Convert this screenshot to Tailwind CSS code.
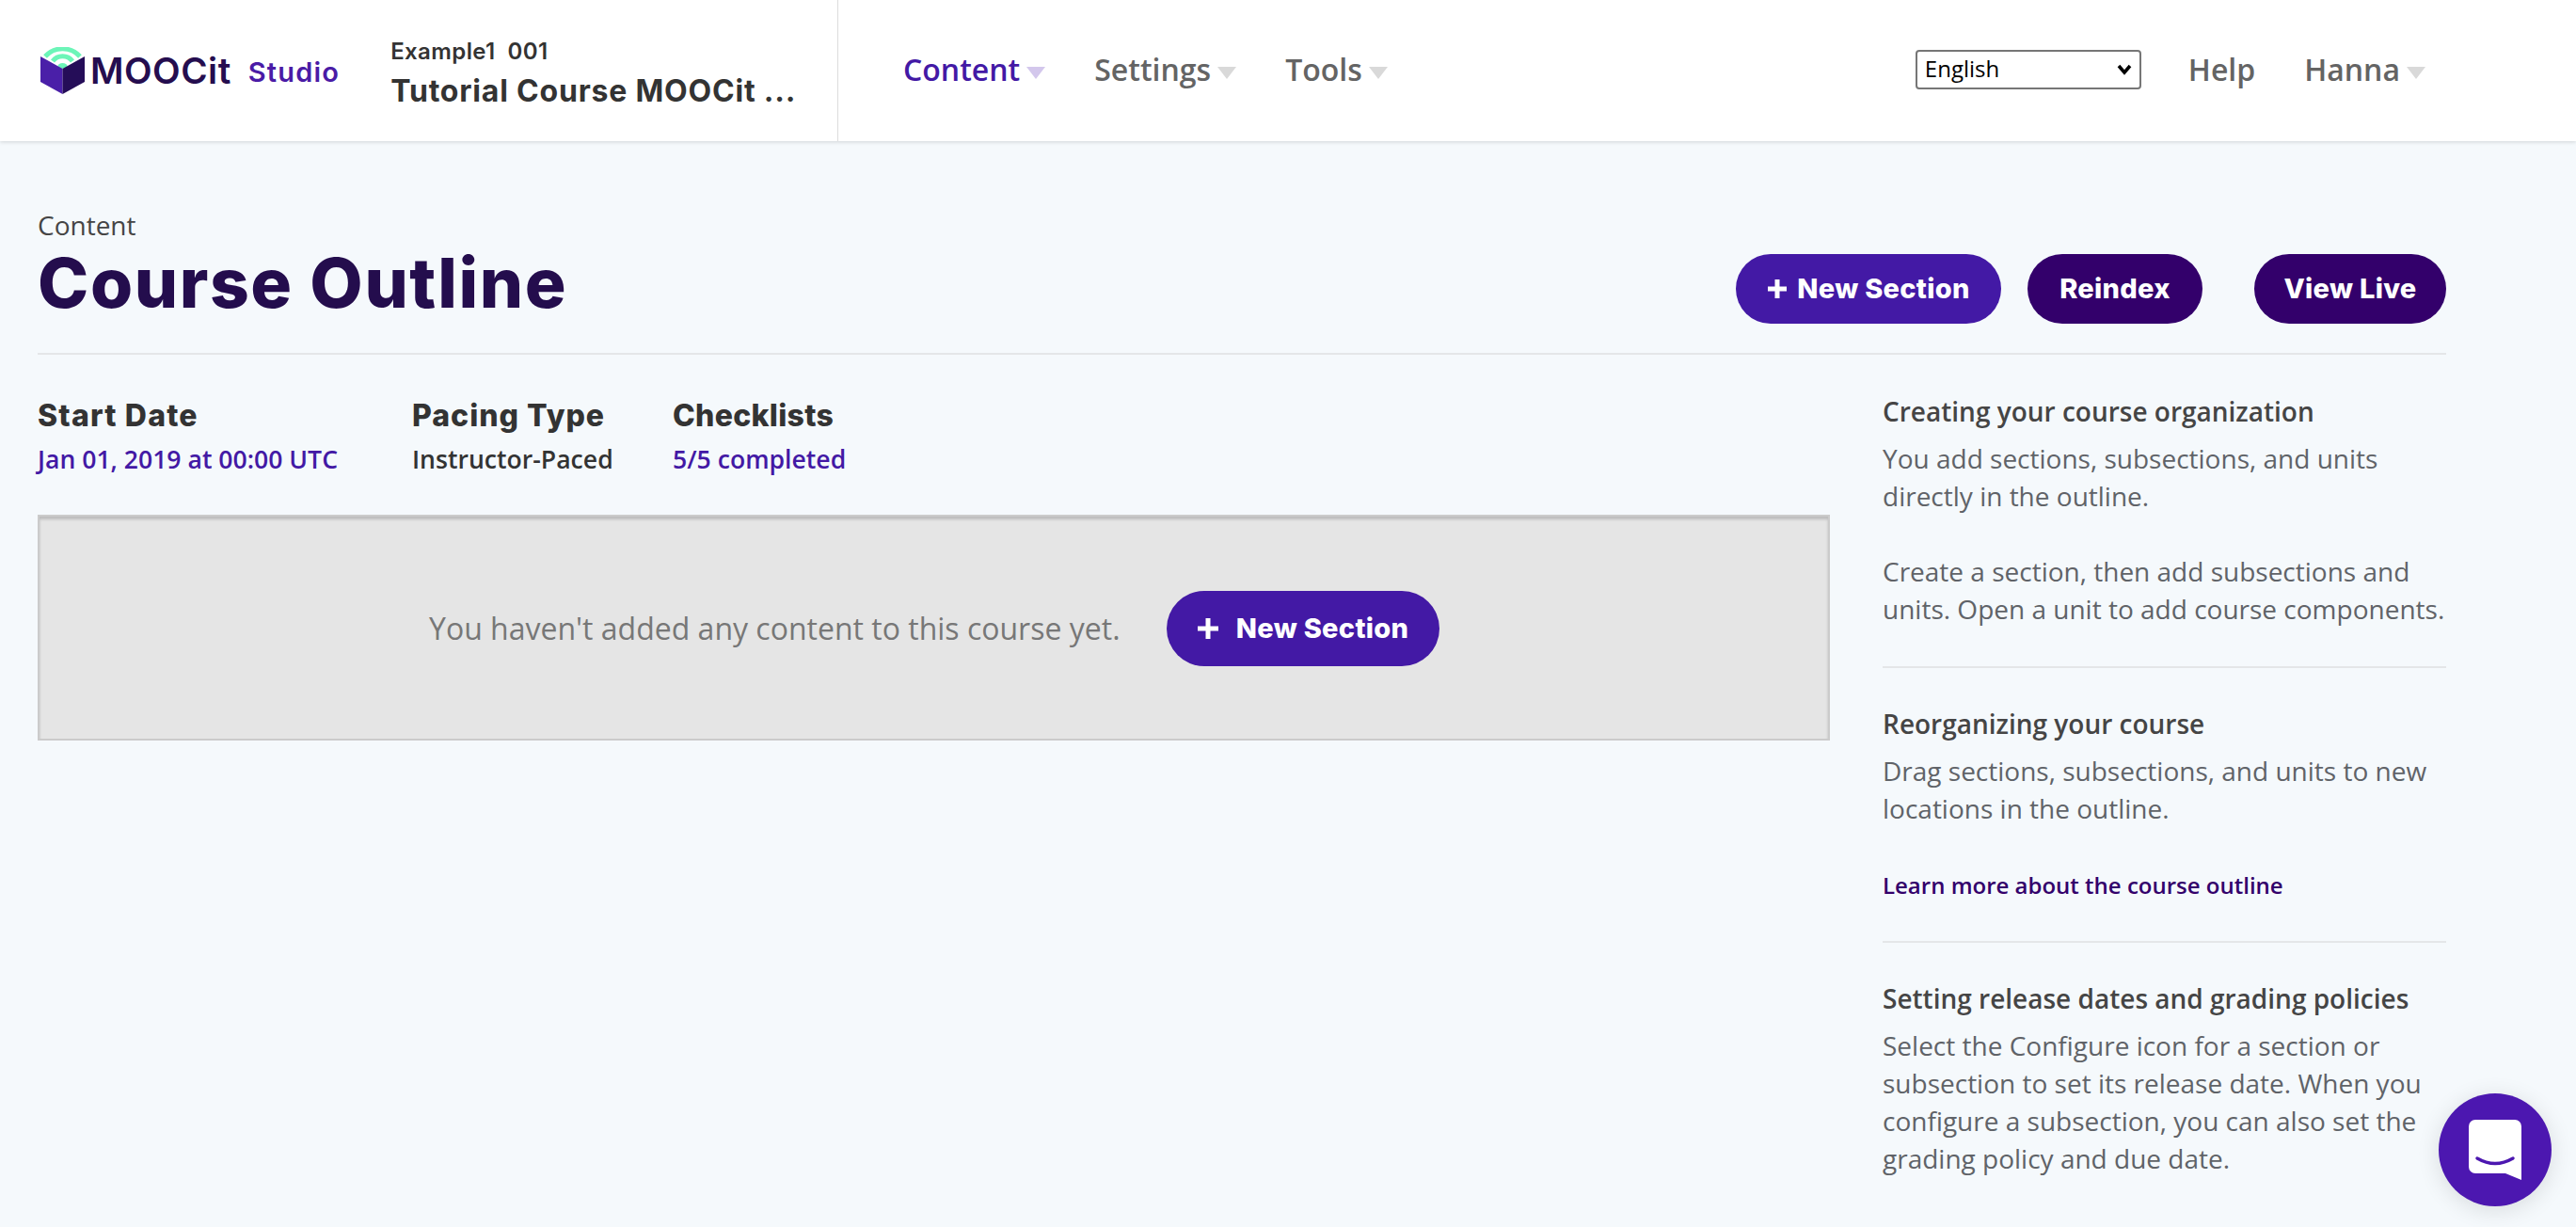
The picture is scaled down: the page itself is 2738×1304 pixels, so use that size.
<!DOCTYPE html>
<html><head><meta charset="utf-8"><title>Course Outline</title>
<script src="https://cdn.jsdelivr.net/npm/@tailwindcss/browser@4"></script></head>
<body class="m-0 h-[1304px] w-[2738px] overflow-hidden bg-[#f5f9fc] font-['Open_Sans',sans-serif] relative">
<header class="h-[150px] bg-white flex items-center shadow-[0_1px_4px_rgba(0,0,0,0.15)] relative">
  <div class="w-[891px] h-full border-r border-[#dcdcdc] flex items-center pl-[43px] shrink-0">
    <svg width="47" height="50" viewBox="0 0 47 50" class="shrink-0">
      <path d="M5 10 A25 25 0 0 1 42 10" fill="none" stroke="#6cf5b8" stroke-width="5"/>
      <path d="M13 15 A13 13 0 0 1 34 15" fill="none" stroke="#6cf5b8" stroke-width="5"/>
      <ellipse cx="23.500" cy="20" rx="5" ry="3" fill="#6cf5b8"/>
      <path d="M0 10 L23.500 23 V50 L0 37 Z" fill="#4a1fa8"/>
      <path d="M47 10 L23.500 23 V50 L47 37 Z" fill="#250d58"/>
    </svg>
    <span class="ml-[6px] text-[38.5px] font-semibold leading-none text-[#250d4f] font-['Inter',sans-serif] tracking-[0.5px]">MOOCit</span>
    <span class="ml-[18px] mt-[3px] text-[29px] tracking-[1.2px] font-semibold leading-none text-[#4a1ba6] font-['Inter',sans-serif]">Studio</span>
    <div class="ml-[54px] mt-[6px] flex flex-col font-['Inter',sans-serif] text-[#333]">
      <span class="text-[24px] leading-[30px] font-semibold tracking-[0.4px] whitespace-pre">Example1  001</span>
      <span class="text-[32px] leading-[40px] mt-[7px] font-bold whitespace-nowrap tracking-[0.8px]">Tutorial Course MOOCit ...</span>
    </div>
  </div>
  <nav class="flex items-center ml-[69px] mt-[-2px] text-[32px] font-semibold text-[#646464] leading-none">
    <a class="text-[#4319a5] flex items-center">Content<i class="ml-[7px] mt-[6px] border-x-[10px] border-t-[13px] border-x-transparent border-t-[#d3c7ec]"></i></a>
    <a class="ml-[52px] flex items-center">Settings<i class="ml-[7px] mt-[6px] border-x-[10px] border-t-[13px] border-x-transparent border-t-[#d9d9d9]"></i></a>
    <a class="ml-[52px] flex items-center">Tools<i class="ml-[7px] mt-[6px] border-x-[10px] border-t-[13px] border-x-transparent border-t-[#d9d9d9]"></i></a>
  </nav>
  <div class="ml-auto flex items-center mt-[-2px] pr-[160px] text-[32px] font-semibold text-[#646464] leading-none">
    <div class="w-[240px] h-[42px] border-2 border-[#767676] rounded-[4px] flex items-center justify-between pl-[8px] pr-[8px] text-[24px] font-normal text-black">
      <span class="mb-[2px]">English</span>
      <svg width="16" height="14" viewBox="0 0 16 14"><path d="M2 3 L8 10 L14 3" fill="none" stroke="#000" stroke-width="3.500"/></svg>
    </div>
    <a class="ml-[50px]">Help</a>
    <a class="ml-[52px] flex items-center">Hanna<i class="ml-[7px] mt-[6px] border-x-[10px] border-t-[13px] border-x-transparent border-t-[#d9d9d9]"></i></a>
  </div>
</header>

<main class="px-[40px] w-[2640px]">
  <div class="h-[227px] border-b-2 border-[#e4e6e8] flex items-start justify-between">
    <div class="pt-[70px]">
      <div class="text-[28px] leading-[38px] text-[#454545]">Content</div>
      <h1 class="text-[73px] leading-[86px] font-extrabold text-[#240d4d] font-['Inter',sans-serif] whitespace-nowrap tracking-[1.6px]">Course Outline</h1>
    </div>
    <div class="flex mt-[120px] font-['Inter',sans-serif] text-[29px] font-extrabold text-white tracking-[0.3px]">
      <a class="w-[282px] h-[74px] rounded-[37px] bg-[#4319a5] flex items-center justify-center gap-[10px]">
        <svg width="22" height="22" viewBox="0 0 22 22"><path d="M11 1 V21 M1 11 H21" stroke="#fff" stroke-width="5"/></svg>New Section</a>
      <a class="ml-[28px] w-[186px] h-[74px] rounded-[37px] bg-[#33006b] flex items-center justify-center">Reindex</a>
      <a class="ml-[55px] w-[204px] h-[74px] rounded-[37px] bg-[#33006b] flex items-center justify-center">View Live</a>
    </div>
  </div>

  <div class="flex justify-between">
    <section class="w-[1905px]">
      <div class="flex pt-[45px] h-[170px]">
        <div class="w-[398px]">
          <h2 class="text-[32px] leading-[40px] font-extrabold text-[#333] font-['Inter',sans-serif] tracking-[1.2px]">Start Date</h2>
          <a class="block mt-[7px] text-[26.6px] leading-[38px] font-semibold text-[#4319a5]">Jan 01, 2019 at 00:00 UTC</a>
        </div>
        <div class="w-[277px]">
          <h2 class="text-[32px] leading-[40px] font-extrabold text-[#333] font-['Inter',sans-serif] tracking-[1px]">Pacing Type</h2>
          <div class="mt-[7px] text-[26.6px] leading-[38px] font-semibold text-[#333]">Instructor-Paced</div>
        </div>
        <div>
          <h2 class="text-[32px] leading-[40px] font-extrabold text-[#333] font-['Inter',sans-serif] tracking-[0.3px]">Checklists</h2>
          <a class="block mt-[7px] text-[26.6px] leading-[38px] font-semibold text-[#4319a5]">5/5 completed</a>
        </div>
      </div>
      <div class="h-[240px] bg-[#e5e5e5] border-2 border-[#cbcbcb] shadow-[inset_0_3px_3px_rgba(0,0,0,0.18)] flex items-center pl-[414px] pt-[2px]">
        <span class="text-[32px] text-[#777]">You haven't added any content to this course yet.</span>
        <a class="ml-[49px] w-[290px] h-[80px] rounded-[40px] bg-[#4319a5] flex items-center justify-center gap-[18px] text-white text-[29px] font-extrabold font-['Inter',sans-serif] tracking-[0.3px]">
          <svg width="24" height="24" viewBox="0 0 24 24"><path d="M12 1 V23 M1 12 H23" stroke="#fff" stroke-width="5"/></svg>New Section</a>
      </div>
    </section>

    <aside class="w-[599px] pt-[40px] text-[28px] leading-[40px] text-[#606368]">
      <div class="h-[293px] border-b-2 border-[#e4e6e8]">
        <h3 class="font-semibold text-[#454545] mb-[10px]">Creating your course organization</h3>
        <p>You add sections, subsections, and units directly in the outline.</p>
        <p class="mt-[40px] whitespace-nowrap">Create a section, then add subsections and<br>units. Open a unit to add course components.</p>
      </div>
      <div class="h-[292px] pt-[39px] border-b-2 border-[#e4e6e8]">
        <h3 class="font-semibold text-[#454545] mb-[10px]">Reorganizing your course</h3>
        <p>Drag sections, subsections, and units to new locations in the outline.</p>
        <a class="block mt-[44px] text-[24px] leading-[36px] font-semibold text-[#33006b]">Learn more about the course outline</a>
      </div>
      <div class="pt-[39px]">
        <h3 class="font-semibold text-[#454545] mb-[10px]">Setting release dates and grading policies</h3>
        <p class="w-[590px]">Select the Configure icon for a section or subsection to set its release date. When you configure a subsection, you can also set the grading policy and due date.</p>
        <a class="block mt-[48px] text-[24px] leading-[36px] font-semibold text-[#4319a5]">Learn more about grading policy settings</a>
      </div>
    </aside>
  </div>
</main>

<button class="absolute left-[2592px] top-[1162px] w-[120px] h-[120px] rounded-full bg-[#4c17b0] flex items-center justify-center shadow-[0_4px_24px_rgba(0,0,0,0.12)]">
  <svg width="56" height="64" viewBox="0 0 56 64"><path d="M7 0 H49 A7 7 0 0 1 56 7 V64 L39 57 H7 A7 7 0 0 1 0 50 V7 A7 7 0 0 1 7 0 Z" fill="#fff"/><path d="M9 41 Q28 52 47 41" fill="none" stroke="#4c17b0" stroke-width="3.500" stroke-linecap="round"/></svg>
</button>
</body></html>
